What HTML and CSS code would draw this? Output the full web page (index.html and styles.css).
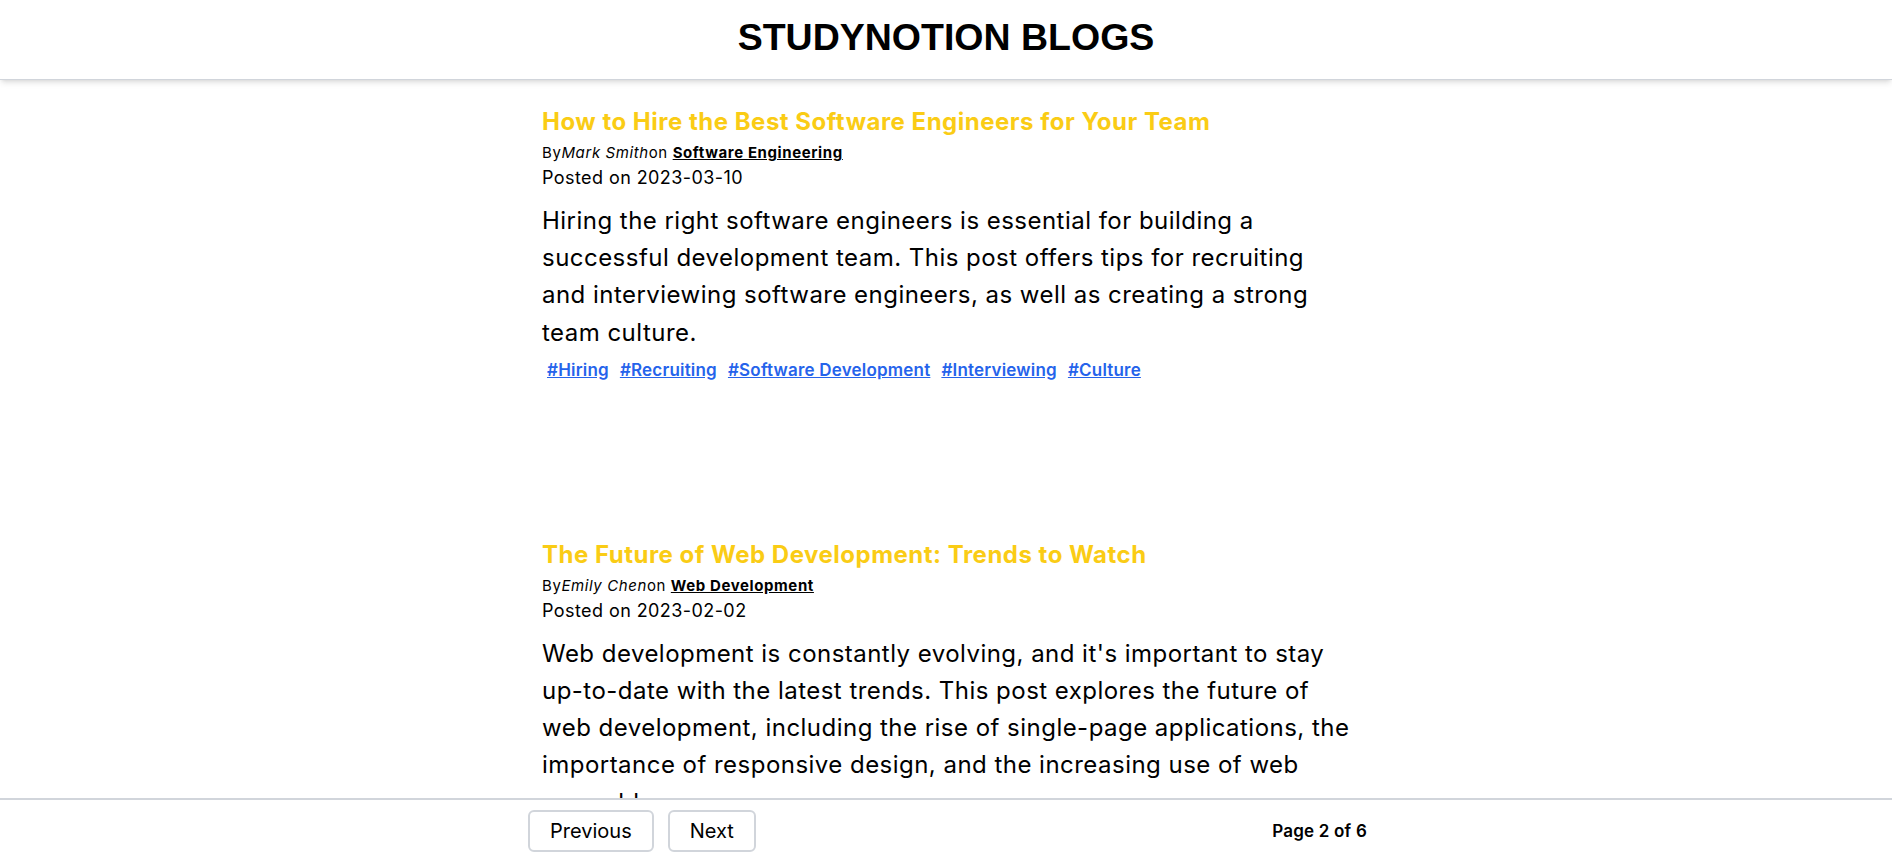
FILE: index.html
```html
<!DOCTYPE html>
<html lang="en">
<head>
<meta charset="utf-8">
<title>StudyNotion Blogs</title>
<link rel="stylesheet" href="styles.css">
</head>
<body>
<header class="site-header">
  <h1 class="site-title">STUDYNOTION BLOGS</h1>
</header>
<main class="posts">
  <article class="post">
    <p class="post-title">How to Hire the Best Software Engineers for Your Team</p>
    <p class="post-meta">By<span class="author">Mark Smith</span>on <a class="category" href="#">Software Engineering</a></p>
    <p class="post-date">Posted on 2023-03-10</p>
    <p class="post-body">Hiring the right software engineers is essential for building a<br>successful development team. This post offers tips for recruiting<br>and interviewing software engineers, as well as creating a strong<br>team culture.</p>
    <div class="tags"><a class="tag" href="#">#Hiring</a><a class="tag" href="#">#Recruiting</a><a class="tag" href="#">#Software Development</a><a class="tag" href="#">#Interviewing</a><a class="tag" href="#">#Culture</a></div>
  </article>
  <article class="post">
    <p class="post-title">The Future of Web Development: Trends to Watch</p>
    <p class="post-meta">By<span class="author">Emily Chen</span>on <a class="category" href="#">Web Development</a></p>
    <p class="post-date">Posted on 2023-02-02</p>
    <p class="post-body">Web development is constantly evolving, and it's important to stay<br>up-to-date with the latest trends. This post explores the future of<br>web development, including the rise of single-page applications, the<br>importance of responsive design, and the increasing use of web<br>assembly.</p>
    <div class="tags"><a class="tag" href="#">#Web Development</a><a class="tag" href="#">#Trends</a><a class="tag" href="#">#Single-Page Applications</a></div>
  </article>
</main>
<footer class="pager">
  <div class="pager-inner">
    <div class="pager-buttons">
      <button class="pager-btn" type="button">Previous</button>
      <button class="pager-btn" type="button">Next</button>
    </div>
    <p class="pager-status">Page 2 of 6</p>
  </div>
</footer>
</body>
</html>
```
FILE: styles.css
```css
* { box-sizing: border-box; }

html, body {
  margin: 0;
  padding: 0;
  height: 100%;
}

body {
  font-family: Inter, "Noto Sans", sans-serif;
  color: #000;
  background: #fff;
  overflow: hidden;
}

p { margin: 0; }

.site-header {
  height: 80px;
  display: flex;
  align-items: center;
  justify-content: center;
  background: #fff;
  border-bottom: 1px solid #d1d5db;
  box-shadow: 0 4px 6px -1px rgba(0,0,0,0.1), 0 2px 4px -2px rgba(0,0,0,0.1);
  position: relative;
  z-index: 2;
}

.site-title {
  margin: 0;
  font-family: "Liberation Sans", Arial, sans-serif;
  font-weight: 700;
  font-size: 37.5px;
  line-height: 1;
  padding-bottom: 4px;
}

.posts {
  width: 900px;
  margin-left: calc(50% - 404px);
  padding-top: 26px;
  display: flex;
  flex-direction: column;
  gap: 157px;
}

.post-title {
  font-size: 24px;
  line-height: 32px;
  font-weight: 700;
  letter-spacing: 0.5px;
  color: #facc15;
}

.post-meta {
  margin-top: 4px;
  font-size: 15px;
  line-height: 21px;
  letter-spacing: 0.6px;
}

.author { font-style: italic; }

.category {
  color: #000;
  font-weight: 700;
  text-decoration: underline;
}

.post-date {
  margin-top: 1px;
  font-size: 18px;
  line-height: 28px;
  letter-spacing: 0.42px;
}

.post-body {
  margin-top: 10px;
  font-size: 24px;
  line-height: 37.2px;
  letter-spacing: 0.47px;
}

.tags {
  margin-top: 7px;
  font-size: 17px;
  line-height: 24px;
  letter-spacing: 0.2px;
}

.tag {
  margin: 0 6px 0 5px;
  color: #2563eb;
  font-weight: 600;
  text-decoration: underline;
}

.pager {
  position: fixed;
  left: 0;
  right: 0;
  bottom: 0;
  height: 59px;
  background: #fff;
  border-top: 2px solid #d1d5db;
  padding: 10px 0 0 3px;
  z-index: 3;
}

.pager-inner {
  width: 839px;
  margin: 0 auto;
  display: flex;
  justify-content: space-between;
  align-items: center;
}

.pager-buttons {
  display: flex;
  gap: 14px;
}

.pager-btn {
  font-family: Inter, "Noto Sans", sans-serif;
  font-size: 20px;
  line-height: 28px;
  padding: 5px 20px;
  color: #000;
  background: #fff;
  border: 2px solid #d1d5db;
  border-radius: 6px;
}

.pager-status {
  font-size: 17px;
  line-height: 24px;
  font-weight: 600;
  letter-spacing: 0.2px;
}
```
